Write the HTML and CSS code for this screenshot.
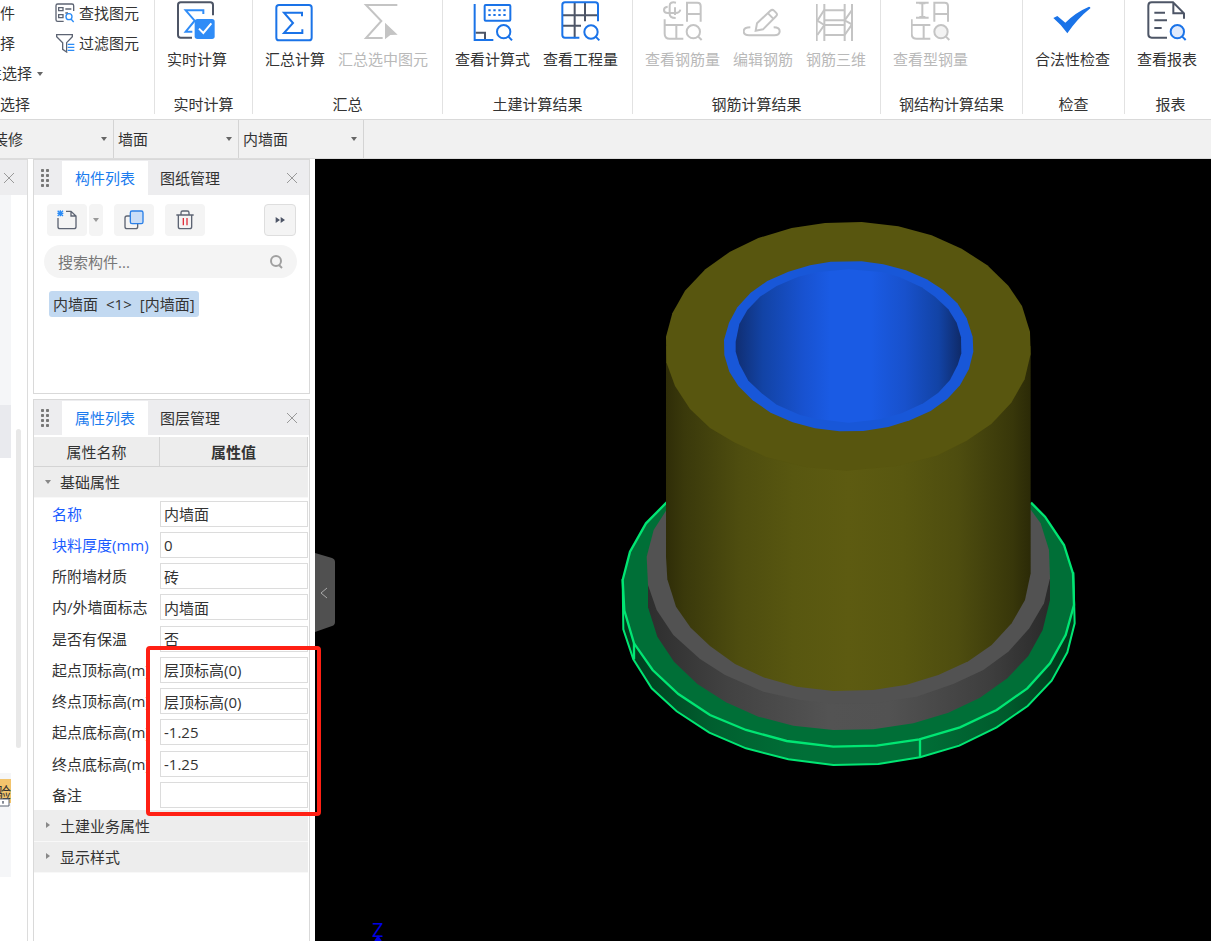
FILE: index.html
```html
<!DOCTYPE html>
<html lang="zh-CN">
<head>
  <meta charset="UTF-8" />
  <meta name="viewport" content="width=device-width, initial-scale=1.0" />
  <title>内墙面</title>
  <link rel="stylesheet" href="styles.css">
</head>
<body>

  <!-- 功能区 -->
  <header class="ribbon">
    <section class="group group-select">
      <div class="tools">
        <div class="mini-col mini-cut">
          <button class="mini">件</button>
          <button class="mini">择</button>
          <button class="mini">性选择</button>
        </div>
        <i class="caret"></i>
        <div class="mini-col">
          <button class="mini">
            <svg class="mini-icon" viewBox="0 0 60 60" fill="none" stroke="#5d6473" stroke-width="4">
              <path d="M56 24V8q0-5-5-5H8Q3 3 3 8v42q0 5 5 5h18"/>
              <path d="M11 14h13v9H11zM31 18h18M11 35h13v9H11zM31 30h8"/>
              <g stroke="#2b8cf7"><circle cx="42" cy="41" r="9"/><path d="M48 48l8 9"/></g>
            </svg>查找图元</button>
          <button class="mini">
            <svg class="mini-icon" viewBox="0 0 60 60" fill="none" stroke="#5d6473" stroke-width="4">
              <path d="M5 5h47v6L35 29v28l-12-8V29L5 11z"/>
              <path stroke="#fff" stroke-width="28" d="M38 43h22"/>
              <path stroke="#2b8cf7" d="M38 34h20M38 43h20M38 52h20"/>
            </svg>过滤图元</button>
        </div>
      </div>
      <h2 class="group-title">选择</h2>
    </section>

    <section class="group group-realtime">
      <div class="tools">
        <button class="tool">
          <svg class="icon" viewBox="0 0 120 132">
            <path class="dark" d="M108 46V15q0-8-8-8H11q-8 0-8 8v90q0 8 8 8h34"/>
            <path class="sky" d="M79 42V31H26l27 31-27 33h20"/>
            <rect x="53" y="57" width="60" height="60" rx="8" fill="#2f8cf7"/>
            <path d="M66 86l13 13 24-29" fill="none" stroke="#fff" stroke-width="6"/>
          </svg>实时计算</button>
      </div>
      <h2 class="group-title">实时计算</h2>
    </section>

    <section class="group">
      <div class="tools">
        <button class="tool">
          <svg class="icon" viewBox="0 0 120 132">
            <rect class="blue" x="4" y="15" width="106" height="106" rx="8"/>
            <path class="blue" d="M81 49V38H27l27 31-27 30h55V88"/>
          </svg>汇总计算</button>
        <button class="tool" disabled>
          <svg class="icon" viewBox="0 0 120 132">
            <path class="gray" d="M103 15H9l46 48L9 114h50"/>
            <path d="M66 68l38 36-22 1-16 13z" fill="#c4c4c4"/>
          </svg>汇总选中图元</button>
      </div>
      <h2 class="group-title">汇总</h2>
    </section>

    <section class="group">
      <div class="tools">
        <button class="tool">
          <svg class="icon" viewBox="0 0 120 132">
            <path class="dark" d="M8 98h28v20"/>
            <path class="blue" d="M5 12v108h56"/>
            <rect class="blue" x="35" y="15" width="77" height="47" rx="3"/>
            <path class="blue" stroke-dasharray="7 8" d="M46 31h55M46 45h55"/>
            <circle class="blue" cx="92" cy="95" r="20"/><path class="blue" d="M106 109l11 12"/>
          </svg>查看计算式</button>
        <button class="tool">
          <svg class="icon" viewBox="0 0 120 132">
            <path class="dark" d="M41 8v107M72 8v56M5 46h105M5 77h55"/>
            <path class="blue" d="M111 64V15q0-8-8-8H12q-8 0-8 8v90q0 8 8 8h43"/>
            <circle class="blue" cx="90" cy="96" r="20"/><path class="blue" d="M104 110l11 11"/>
          </svg>查看工程量</button>
      </div>
      <h2 class="group-title">土建计算结果</h2>
    </section>

    <section class="group">
      <div class="tools">
        <button class="tool" disabled>
          <svg class="icon" viewBox="0 0 120 132">
            <path class="gray" d="M39 8Q20 4 20 17v25q0 12 18 12M36 22v23M14 20Q3 21 3 30t11 9h24q12 0 14-10"/>
            <path class="gray" d="M72 65V8h31q10 0 10 10v47M72 42h41"/>
            <path class="gray" d="M5 58v43q0 15 15 15h41M5 75h56M40 75v41"/>
            <circle class="gray" cx="91" cy="95" r="20"/><path class="gray" d="M105 109l11 11"/>
          </svg>查看钢筋量</button>
        <button class="tool" disabled>
          <svg class="icon" viewBox="0 0 120 132">
            <path class="gray" d="M38 92l4-22 40-38q6-5 11 0l6 6q6 6 0 11L60 88zM73 38l17 17"/>
            <path class="gray" d="M22 82Q2 82 2 94t16 12h76q16 0 16-12T92 82"/>
          </svg>编辑钢筋</button>
        <button class="tool" disabled>
          <svg class="icon" viewBox="0 0 120 132">
            <path class="gray" d="M2 12v111M25 12v111M86 12v111M108 12v111"/>
            <path class="gray" d="M25 31h61M25 61h61M25 75h61M25 105h61M25 29L4 62l21 13M86 61l22-31M4 105l21-30M86 105l22-32M86 61l22 12"/>
          </svg>钢筋三维</button>
      </div>
      <h2 class="group-title">钢筋计算结果</h2>
    </section>

    <section class="group group-steel">
      <div class="tools">
        <button class="tool" disabled>
          <svg class="icon" viewBox="0 0 120 132">
            <path class="gray" d="M15 8h38M15 53h38M34 8v45M25 10h18M25 51h18"/>
            <path class="gray" d="M70 65V8h31q10 0 10 10v47M70 42h41"/>
            <path class="gray" d="M2 58v43q0 15 15 15h41M2 75h56M38 75v41"/>
            <circle class="gray" cx="90" cy="95" r="20" fill="#f3f3f3"/><path class="gray" d="M104 109l11 11"/>
          </svg>查看型钢量</button>
      </div>
      <h2 class="group-title">钢结构计算结果</h2>
    </section>

    <section class="group group-check">
      <div class="tools">
        <button class="tool">
          <svg class="icon" viewBox="0 0 120 132">
            <path d="M1 54l12-6 24 20q31-31 71-48 5 1 4 5-38 30-69 75Q23 72 1 54z" fill="#1a73e8"/>
          </svg>合法性检查</button>
      </div>
      <h2 class="group-title">检查</h2>
    </section>

    <section class="group group-report">
      <div class="tools">
        <button class="tool">
          <svg class="icon" viewBox="0 0 120 132">
            <path class="dark" d="M60 113H14q-10 0-10-10V17Q4 7 14 7h64l33 33v16M79 8v32h32M22 38h32M22 61h38M22 84h22"/>
            <circle class="blue" cx="91" cy="95" r="20" fill="#e0eafc"/><path class="blue" d="M105 109l11 11"/>
          </svg>查看报表</button>
      </div>
      <h2 class="group-title">报表</h2>
    </section>
  </header>

  <!-- 构件筛选 -->
  <nav class="filter-bar">
    <label class="combo"><select aria-label="类型"><option>装修</option></select><i class="caret"></i></label>
    <label class="combo"><select aria-label="构件类型"><option>墙面</option></select><i class="caret"></i></label>
    <label class="combo"><select aria-label="构件"><option>内墙面</option></select><i class="caret"></i></label>
  </nav>

  <main class="workspace">
    <!-- 导航栏 -->
    <aside class="nav-strip">
      <div class="panel-head">
        <button class="close" aria-label="关闭"><svg viewBox="0 0 12 12"><path d="M1 1l10 10M11 1L1 11"/></svg></button>
      </div>
      <div class="nav-body">
        <div class="nav-tree">
          <div class="nav-items"></div>
          <div class="nav-current"></div>
          <div class="nav-foot">
            <div class="nav-badge">验</div>
            <svg class="lock" viewBox="0 0 12 12"><path d="M-1 3h10v7H-1z" fill="#fff"/><path d="M3 5v3M2 6h2"/></svg>
          </div>
        </div>
        <div class="nav-scroll"></div>
      </div>
    </aside>

    <div class="docks">
      <!-- 构件列表 -->
      <section class="panel panel-list">
        <div class="panel-head">
          <i class="grip"></i>
          <button class="tab active">构件列表</button>
          <button class="tab">图纸管理</button>
          <button class="close" aria-label="关闭"><svg viewBox="0 0 12 12"><path d="M1 1l10 10M11 1L1 11"/></svg></button>
        </div>
        <div class="toolbar">
          <div class="split">
            <button class="tb" aria-label="新建">
              <svg viewBox="0 0 60 60" fill="none" stroke="#5d6473" stroke-width="4">
                <path d="M3 24v26q0 6 6 6h42q6 0 6-6V18L42 4H27M42 4v14h15"/>
                <path stroke="#2b8cf7" d="M2 2l16 16M18 2L2 18M10 1v18M1 10h18"/>
              </svg></button>
            <button class="tb tb-drop" aria-label="更多新建"><i class="caret"></i></button>
          </div>
          <button class="tb" aria-label="复制">
            <svg viewBox="0 0 60 60" fill="none" stroke="#5d6473" stroke-width="4">
              <rect x="3" y="18" width="38" height="38" rx="6"/>
              <rect x="19" y="3" width="38" height="38" rx="5" fill="#c9ddf7" stroke="#2b80e8"/>
            </svg></button>
          <button class="tb" aria-label="删除">
            <svg viewBox="0 0 60 60" fill="none" stroke="#5d6473" stroke-width="4">
              <path d="M4 15h52M18 14V8q0-5 5-5h14q5 0 5 5v6M10 16v34q0 6 6 6h28q6 0 6-6V16"/>
              <path stroke="#e0303c" d="M25 24v22M36 24v22"/>
            </svg></button>
          <button class="tb tb-more" aria-label="展开">
            <svg viewBox="0 0 60 60" fill="#4d5566"><path d="M17 21l13 9-13 9zM32 21l13 9-13 9z"/></svg></button>
        </div>
        <div class="search">
          <input type="text" placeholder="搜索构件..." aria-label="搜索构件">
          <svg viewBox="0 0 14 14"><circle cx="7" cy="6" r="5"/><path d="M10 10l3 3"/></svg>
        </div>
        <ul class="comp-list">
          <li><span>内墙面</span> <span>&lt;1&gt;</span> <span>[内墙面]</span></li>
        </ul>
      </section>

      <!-- 属性列表 -->
      <section class="panel panel-props">
        <div class="panel-head">
          <i class="grip"></i>
          <button class="tab active">属性列表</button>
          <button class="tab">图层管理</button>
          <button class="close" aria-label="关闭"><svg viewBox="0 0 12 12"><path d="M1 1l10 10M11 1L1 11"/></svg></button>
        </div>
        <table class="props">
          <thead>
            <tr><th class="col-name">属性名称</th><th class="col-value">属性值</th></tr>
          </thead>
          <tbody>
            <tr class="cat open"><td colspan="2"><i class="fold"></i>基础属性</td></tr>
            <tr><td class="name key"><label for="p1">名称</label></td><td><input id="p1" value="内墙面"></td></tr>
            <tr><td class="name key"><label for="p2">块料厚度(mm)</label></td><td><input id="p2" value="0"></td></tr>
            <tr><td class="name"><label for="p3">所附墙材质</label></td><td><input id="p3" value="砖"></td></tr>
            <tr><td class="name"><label for="p4">内/外墙面标志</label></td><td><input id="p4" value="内墙面"></td></tr>
            <tr><td class="name"><label for="p5">是否有保温</label></td><td><input id="p5" value="否"></td></tr>
            <tr><td class="name"><label for="p6">起点顶标高(m)</label></td><td><input id="p6" value="层顶标高(0)"></td></tr>
            <tr><td class="name"><label for="p7">终点顶标高(m)</label></td><td><input id="p7" value="层顶标高(0)"></td></tr>
            <tr><td class="name"><label for="p8">起点底标高(m)</label></td><td><input id="p8" value="-1.25"></td></tr>
            <tr><td class="name"><label for="p9">终点底标高(m)</label></td><td><input id="p9" value="-1.25"></td></tr>
            <tr><td class="name"><label for="p10">备注</label></td><td><input id="p10" value=""></td></tr>
            <tr class="cat"><td colspan="2"><i class="fold"></i>土建业务属性</td></tr>
            <tr class="cat"><td colspan="2"><i class="fold"></i>显示样式</td></tr>
          </tbody>
        </table>
        <div class="mark"></div>
      </section>
    </div>

    <!-- 三维视图 -->
    <section class="view3d">
      <button class="collapse" aria-label="收起">
        <svg viewBox="0 0 20 79"><path d="M0 0l17 5q3 1 3 4v60q0 3-3 4L0 79z" fill="#505050"/><path d="M12 35l-6 5 6 5" fill="none" stroke="#aaa"/></svg>
      </button>
      <svg class="scene" viewBox="315 159 896 782">
        <defs>
          <linearGradient id="olive">
            <stop offset="0" stop-color="#2f2d08"/><stop offset=".05" stop-color="#3a390b"/>
            <stop offset=".2" stop-color="#4e4d0f"/><stop offset=".35" stop-color="#585710"/>
            <stop offset=".5" stop-color="#5d5b11"/><stop offset=".65" stop-color="#585710"/>
            <stop offset=".8" stop-color="#4e4d0f"/><stop offset=".95" stop-color="#38370a"/>
            <stop offset="1" stop-color="#2b2a07"/>
          </linearGradient>
          <linearGradient id="hole">
            <stop offset="0" stop-color="#102e72"/><stop offset=".12" stop-color="#1243a5"/>
            <stop offset=".3" stop-color="#1852d0"/><stop offset=".42" stop-color="#1a5be4"/>
            <stop offset=".6" stop-color="#1a5be4"/><stop offset=".75" stop-color="#1851cc"/>
            <stop offset=".9" stop-color="#1243a5"/><stop offset="1" stop-color="#0f2a68"/>
          </linearGradient>
          <linearGradient id="stone">
            <stop offset="0" stop-color="#2e2e2e"/><stop offset=".2" stop-color="#424242"/>
            <stop offset=".45" stop-color="#535353"/><stop offset=".6" stop-color="#525252"/>
            <stop offset=".85" stop-color="#3e3e3e"/><stop offset="1" stop-color="#2a2a2a"/>
          </linearGradient>
          <linearGradient id="green">
            <stop offset="0" stop-color="#003a1c"/><stop offset=".2" stop-color="#005f2f"/>
            <stop offset=".4" stop-color="#006f37"/><stop offset=".65" stop-color="#006f37"/>
            <stop offset=".85" stop-color="#005a2c"/><stop offset="1" stop-color="#003318"/>
          </linearGradient>
        </defs>
        <!-- 底座与筒身 -->
        <g transform="translate(600 490) scale(.33333)">
          <path d="M68 270L70 418 100 508 155 595 230 664 328 728 438 775 565 808 700 825 835 822 960 802 1078 767 1190 712 1283 648 1355 572 1402 487 1424 400 1420 250z" fill="url(#green)" stroke="#00e673" stroke-width="6"/>
          <path d="M200 37L138 100 90 185 68 270 73 362 102 460 158 540 235 612 330 675 438 720 560 753 700 770 830 767 958 748 1080 712 1190 660 1282 595 1350 520 1397 435 1422 345 1419 250 1392 165 1335 80 1293 38" fill="#006f37" stroke="#00e673" stroke-width="7"/>
          <path d="M102 460V508M960 748V802" stroke="#00e673" stroke-width="7"/>
          <path d="M144 270V352L172 440 222 515 292 582 378 637 475 680 580 707 700 720 820 718 940 700 1045 668 1140 623 1222 565 1285 498 1328 420 1350 330V265z" fill="url(#stone)"/>
          <path d="M198 62L161 120 140 200 144 285 170 360 220 435 300 507 375 555 490 605 600 630 700 642 825 640 950 620 1060 582 1150 540 1225 485 1288 415 1332 340 1350 265 1347 180 1322 100 1293 60z" fill="#525252"/>
          <path d="M198-432V200L202 268 228 350 272 413 330 468 405 522 490 562 590 590 700 603 820 600 920 584 1015 555 1105 514 1175 465 1235 400 1275 330 1292 250V-432z" fill="url(#olive)"/>
        </g>
        <!-- 顶面与内壁 -->
        <g transform="translate(600 200) scale(.33333)">
          <path d="M198 410L217 340 255 272 316 208 390 155 475 114 575 84 675 69 785 66 895 79 995 106 1085 146 1162 196 1225 257 1266 318 1290 395 1292 462 1274 538 1234 608 1174 672 1100 722 1010 767 890 798 740 812 620 802 500 772 405 728 330 684 270 627 225 558 199 487z" fill="#58560f"/>
          <path d="M372 420L387 368 412 322 452 278 502 243 565 215 630 196 692 185 785 184 850 193 918 211 980 238 1030 270 1072 310 1100 355 1118 410 1120 455 1107 507 1080 556 1042 597 992 633 930 661 865 681 790 693 718 694 645 685 578 667 512 638 458 601 415 558 388 515 373 465z" fill="#1857d8"/>
          <path d="M407 425L418 372 442 330 480 290 530 258 595 230 650 217 746 208 850 217 900 232 965 262 1005 290 1045 328 1070 368 1083 412 1084 460 1073 495 1050 540 1015 578 970 610 905 640 840 658 746 668 650 657 600 645 530 614 485 580 445 542 418 492 407 455z" fill="url(#hole)"/>
        </g>
        <text class="axis" x="372" y="937">Z</text>
        <path d="M378 935l5 8h-10z" fill="#0000e6"/>
      </svg>
    </section>
  </main>

</body>
</html>
```
FILE: styles.css
```css
/* ===== 基础 ===== */
*{box-sizing:border-box}
body{
  margin:0;
  height:100vh;
  display:flex;
  flex-direction:column;
  overflow:hidden;
  background:#fff;
  color:#333;
  font-family:"Open Sans","Noto Sans CJK SC",sans-serif;
  font-size:15px;
  line-height:20px;
}
button,input,select{
  font:inherit;
  color:inherit;
  border:none;
  background:none;
  padding:0;
  margin:0;
}
h2{margin:0;font-size:15px;font-weight:400}
svg{display:block}

.caret{
  border:3px solid transparent;
  border-top:4px solid #666;
  border-bottom:0;
}

/* ===== 功能区 ===== */
.ribbon{
  display:flex;
  flex:none;
  padding-bottom:5px;
  border-bottom:1px solid #d9d9d9;
  overflow:hidden;
}
.group{
  flex:none;
  display:flex;
  flex-direction:column;
  border-right:1px solid #e2e2e2;
}
.tools{
  display:flex;
  gap:13px;
  height:94px;
  padding:0 14px 0 12px;
}
.group-title{text-align:center;white-space:nowrap}
.group-realtime{width:98px}
.group-steel{width:142px}
.group-check{width:102px}
.group-report{width:92px}
.tool{
  display:flex;
  flex-direction:column;
  align-items:center;
  gap:5px;
  height:69px;
  white-space:nowrap;
}
.tool:disabled{color:#b9b9b9}
.icon{width:40px;height:44px;fill:none;stroke-width:6}
.icon .dark{stroke:#4d5566}
.icon .blue{stroke:#1a73e8}
.icon .sky{stroke:#2f8cf7}
.icon .gray{stroke:#c4c4c4}

.group-select{width:155px}
.group-select .tools{gap:0;padding:0}
.group-select .group-title{width:28px}
.group-select .caret{margin:72px 12px 0 5px}
.mini-col{display:flex;flex-direction:column;margin-top:-2px}
.mini{
  display:flex;
  align-items:center;
  gap:4px;
  height:30px;
  white-space:nowrap;
}
.mini-icon{width:20px;height:20px}
.mini-cut{width:32px;overflow:hidden}
.mini-cut .mini{width:16px}
.mini-cut .mini:last-child{width:32px;justify-content:flex-end}

/* ===== 筛选栏 ===== */
.filter-bar{
  display:flex;
  flex:none;
  height:39px;
  margin-left:-11px;
  background:#f1f1f1;
  border-bottom:1px solid #dcdcdc;
}
.combo{
  display:flex;
  align-items:center;
  width:125px;
  padding-right:6px;
  border-right:1px solid #d4d4d4;
}
.combo select{
  flex:1;
  appearance:none;
  padding-left:4px;
  outline:none;
}

/* ===== 工作区 ===== */
.workspace{flex:1;display:flex;min-height:0}
.panel-head{
  display:flex;
  flex:none;
  align-items:center;
  height:35px;
  background:#ededef;
}
.close{margin-left:auto;padding:0 11px}
.close svg{width:12px;height:12px;fill:none;stroke:#999}
.grip{
  width:10px;
  height:20px;
  margin:0 12px 0 6px;
  background:radial-gradient(circle,#777 1px,#aaa 2px,transparent 2px) 0 0/5px 5px;
}
.tab{height:34px;padding:0 13px;align-self:flex-end}
.tab.active{color:#1a7bee;background:#fff}
.tab:not(.active){padding-left:12px}

/* ===== 左侧导航 ===== */
.nav-strip{
  flex:none;
  width:28px;
  border-top:1px solid #dcdcdc;
  border-right:1px solid #dcdcdc;
}
.nav-strip .close{padding:0 12px 0 0}
.nav-body{display:flex;gap:5px}
.nav-tree{width:11px}
.nav-items{height:210px;background:#f5f6f8}
.nav-current{height:53px;background:#e9eaee}
.nav-foot{
  height:104px;
  margin-top:315px;
  padding-top:6px;
  background:#f5f6f8;
}
.nav-badge{
  display:flex;
  justify-content:flex-end;
  overflow:hidden;
  height:24px;
  line-height:26px;
  background:#f2c46d;
}
.lock{
  width:12px;
  height:12px;
  margin-top:-7px;
  position:relative;
  fill:none;
  stroke:#5d6473;
}
.nav-scroll{
  width:5px;
  height:319px;
  margin-top:234px;
  border-radius:3px;
  background:#e8e8e8;
}

/* ===== 停靠面板 ===== */
.docks{
  flex:none;
  width:277px;
  margin:0 5px;
  display:flex;
  flex-direction:column;
  gap:5px;
}
.panel{border:1px solid #d9d9d9}
.panel-list{height:235px;flex:none}
.panel-props{flex:1;position:relative;border-bottom:none}

.toolbar{display:flex;gap:11px;padding:9px 13px}
.toolbar .caret{border-top-color:#999}
.split{display:flex;gap:2px}
.tb{
  display:flex;
  align-items:center;
  justify-content:center;
  width:40px;
  height:32px;
  border-radius:4px;
  background:#f4f4f4;
}
.tb svg{width:20px;height:20px}
.tb-drop{width:14px}
.tb-more{
  width:32px;
  margin-left:auto;
  border:1px solid #dedede;
}
.search{
  display:flex;
  align-items:center;
  height:33px;
  margin:0 12px 13px 10px;
  padding:0 14px;
  border-radius:17px;
  background:#f4f4f4;
}
.search input{flex:1;min-width:0;outline:none}
.search input::placeholder{color:#777;opacity:1}
.search svg{width:14px;height:14px;fill:none;stroke:#a0a0a0;stroke-width:2}
.comp-list{list-style:none;margin:0;padding:0 15px}
.comp-list li{
  display:flex;
  gap:8px;
  width:fit-content;
  padding:3px 4px;
  border-radius:3px;
  background:#c2d9f1;
}

/* ===== 属性表 ===== */
.props{
  width:274px;
  height:436px;
  margin-top:2px;
  table-layout:fixed;
  border-collapse:separate;
  border-spacing:0;
}
.props th{
  height:30px;
  padding:0;
  background:#ededed;
  border-right:1px solid #d4d4d4;
  border-bottom:1px solid #d4d4d4;
}
.col-name{width:126px;font-weight:400}
.col-value{font-weight:700}
.props td{height:31px;padding:0}
.props .name{padding:0 7px 0 18px}
.name label{display:block;overflow:hidden;white-space:nowrap}
.name.key{color:#1a5cff}
.props input{
  display:block;
  width:148px;
  height:26px;
  padding:0 3px;
  border:1px solid #dcdcdc;
  outline:none;
}
.props .cat td{background:#ededed;border-bottom:1px solid #f8f8f8}
.fold{
  display:inline-block;
  margin:0 10px 4px 12px;
  border:3px solid transparent;
  border-left:4px solid #888;
  border-right:0;
}
.open .fold{
  margin:0 9px 4px 11px;
  border:3px solid transparent;
  border-top:4px solid #888;
  border-bottom:0;
}

/* 红框标注 */
.mark{
  position:absolute;
  top:246px;
  left:112px;
  z-index:2;
  width:175px;
  height:170px;
  border:4px solid #ff2014;
  border-radius:4px;
}

/* ===== 三维视图 ===== */
.view3d{flex:1;position:relative;min-width:0;background:#000}
.scene{width:100%;height:100%}
.axis{font-size:20px;fill:#0000e6}
.collapse{
  position:absolute;
  left:0;
  top:394px;
  width:20px;
  height:79px;
}
```
